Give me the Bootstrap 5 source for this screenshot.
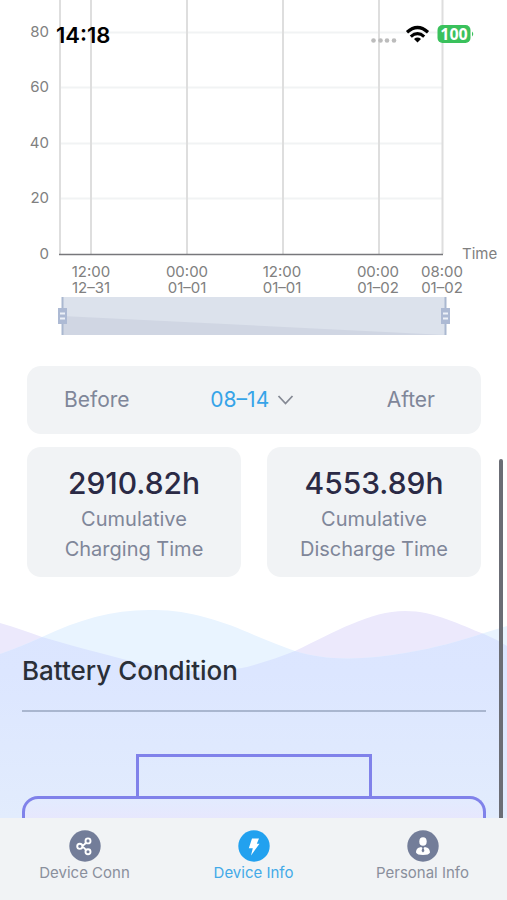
<!DOCTYPE html>
<html lang="en">
<head>
<meta charset="utf-8">
<meta name="viewport" content="width=device-width, initial-scale=1">
<title>Device Info</title>
<link href="https://cdn.jsdelivr.net/npm/bootstrap@5.3.0/dist/css/bootstrap.min.css" rel="stylesheet">
<style>
body { font-family: Inter, "Liberation Sans", sans-serif; color: #7f8699; background: #fff; }
.status-bar { padding: 22px 33px 0 56px; color: #000; }
.clock { font-size: 22px; line-height: 26px; font-weight: 600; }
.chart { font-size: 15px; fill: #808080; }
.panel { background: #f1f3f5; border-radius: 14px; }
.content { padding: 11px 26px 0 27px; }
.date-bar { height: 68px; padding: 0 46px 0 37px; }
.date-bar .btn { min-width: 60px; font-size: 21px; line-height: 28px; color: #7f8699; border: 0; }
.date-bar .btn.picked { color: #37a4e8; }
.stats { gap: 26px; margin-top: 13px; }
.stat { padding: 15px 20px 13px; font-size: 20px; line-height: 30px; }
.figure-value { font-size: 30px; line-height: 42px; font-weight: 500; color: #2b2a45; }
.condition { margin-top: 23px; padding: 54px 21px 0 22px; }
.waves { z-index: -1; }
.condition h2 { font-size: 26px; line-height: 34px; font-weight: 500; color: #2a2f38; padding-bottom: 22px; border-bottom: 2px solid #a9b6cf; }
.terminal { width: 51%; height: 42px; margin-top: 42px; border: 3px solid #8082ea; border-bottom: 0; }
.cell { border: 3px solid #8082ea; border-bottom: 0; border-radius: 16px 16px 0 0; background: linear-gradient(#e2ebfe, #e8e6fd 24px); }
.tabs { height: 82px; padding-top: 12px; background: #f1f3f5; }
.tabs a { font-size: 15px; line-height: 22px; color: #8a8f9c; }
.tabs a.active { color: #43aae8; }
.scroll-thumb { top: 459px; bottom: 82px; right: 4px; width: 4px; border-radius: 2px 2px 0 0; background: #6b6d75; }
</style>
</head>
<body class="vh-100 d-flex flex-column overflow-hidden position-relative">
<header class="status-bar position-absolute top-0 start-0 end-0 d-flex justify-content-between">
  <span class="clock">14:18</span>
  <svg width="103" height="26" viewBox="0 0 103 26" role="img" aria-label="Wi-Fi on, battery 100">
    <g fill="#bcbcbc"><circle cx="2.500" cy="18.500" r="2.300"/><circle cx="9.500" cy="18.500" r="2.300"/><circle cx="16" cy="18.500" r="2.300"/><circle cx="23" cy="18.500" r="2.300"/></g>
    <g fill="none" stroke="#000" stroke-width="3.200"><path d="M36 10.200Q46.500 .8 57 10.200"/><path d="M39.800 14.600Q46.500 8.800 53.200 14.600"/></g>
    <path d="M43 17Q46.500 14.200 50 17L46.500 20.500Z"/>
    <rect x="66.500" y="3" width="33" height="18" rx="5" fill="#3ac15c"/><path d="M101 9.500q2.500 2.500 0 5z" fill="#3ac15c"/>
    <text x="83" y="18" text-anchor="middle" font-family="Open Sans" font-size="16" font-weight="700" fill="#fff">100</text>
  </svg>
</header>

<svg class="chart w-100 flex-shrink-0" viewBox="0 0 507 355" role="img" aria-label="Values over time">
  <path d="M60 32.500H443M60 87.500H443M60 143.500H443M60 198.500H443" stroke="#f1f3f4" stroke-width="2"/>
  <path d="M60 0V254M91 0V254M187 0V254M283 0V254M379 0V254M442.500 0V254" stroke="#dedede" stroke-width="2"/>
  <path d="M59 254.500H443" stroke="#77777b" stroke-width="1.500"/>
  <g text-anchor="end"><text x="49" y="37">80</text><text x="49" y="92">60</text><text x="49" y="148">40</text><text x="49" y="203">20</text><text x="49" y="259">0</text></g>
  <text x="462" y="259">Time</text>
  <g text-anchor="middle">
    <text x="91" y="277">12:00</text><text x="91" y="293">12–31</text>
    <text x="187" y="277">00:00</text><text x="187" y="293">01–01</text>
    <text x="282" y="277">12:00</text><text x="282" y="293">01–01</text>
    <text x="378" y="277">00:00</text><text x="378" y="293">01–02</text>
    <text x="442" y="277">08:00</text><text x="442" y="293">01–02</text>
  </g>
  <rect x="62" y="297" width="384" height="38" fill="#dce2ec"/>
  <path d="M62 316L446 335H62Z" fill="#d0d6e3"/>
  <path d="M62.500 297V335M445.500 297V335" stroke="#aab8d0" stroke-width="2"/>
  <g fill="#adbad4"><rect x="58" y="308" width="9" height="16"/><rect x="441" y="308" width="9" height="16"/></g>
  <path d="M60 313.500H65M60 318.500H65M443 313.500H448M443 318.500H448" stroke="#edf1f8" stroke-width="2"/>
</svg>

<main class="flex-grow-1 d-flex flex-column">
  <div class="content">
    <div class="panel date-bar d-flex align-items-center justify-content-between">
      <button class="btn p-0 text-start" type="button">Before</button>
      <button class="btn picked p-0 d-flex align-items-center gap-2" type="button">08–14
        <svg width="17" height="12" viewBox="0 0 17 12" fill="none" stroke="#858994" stroke-width="1.800" aria-hidden="true"><path d="M1.500 2L8.500 9.500L15.500 2"/></svg>
      </button>
      <button class="btn p-0 text-end" type="button">After</button>
    </div>
    <div class="stats d-flex text-center">
      <div class="panel stat flex-fill w-50"><div class="figure-value">2910.82h</div>Cumulative<br>Charging Time</div>
      <div class="panel stat flex-fill w-50"><div class="figure-value">4553.89h</div>Cumulative<br>Discharge Time</div>
    </div>
  </div>

  <section class="condition position-relative flex-grow-1 d-flex flex-column">
    <svg class="waves position-absolute top-0 start-0 w-100 h-100" viewBox="0 0 507 218" preserveAspectRatio="none" aria-hidden="true">
      <defs>
        <linearGradient id="deep" x1="0" y1="0" x2="0" y2="1"><stop offset="0" stop-color="#dbe5ff"/><stop offset=".3" stop-color="#dce6ff"/><stop offset="1" stop-color="#e2ecfd"/></linearGradient>
        <clipPath id="violet"><path d="M0 23C15 27 28 32 42 37C80 48 115 57 150 66C180 72 220 75 254 65C268 61 282 56 295 51C335 32 370 11 405 11C435 11 460 25 484 34Q496 39 507 46V218H0Z"/></clipPath>
      </defs>
      <path fill="#ece9fc" d="M0 23C15 27 28 32 42 37C80 48 115 57 150 66C180 72 220 75 254 65C268 61 282 56 295 51C335 32 370 11 405 11C435 11 460 25 484 34Q496 39 507 46V218H0Z"/>
      <path fill="#e9f4ff" d="M0 54Q20 47 42 37C80 19 115 9 155 10C190 10 225 22 254 35Q278 45 295 51C325 61 365 60 405 53C435 48 460 41 484 33L507 26V218H0Z"/>
      <path fill="url(#deep)" clip-path="url(#violet)" d="M0 54Q20 47 42 37C80 19 115 9 155 10C190 10 225 22 254 35Q278 45 295 51C325 61 365 60 405 53C435 48 460 41 484 33L507 26V218H0Z"/>
    </svg>
    <h2 class="mb-0">Battery Condition</h2>
    <div class="terminal mx-auto flex-shrink-0"></div>
    <div class="cell flex-grow-1"></div>
  </section>
</main>

<nav class="tabs row g-0 text-center flex-shrink-0" aria-label="Main">
  <a href="#" class="col d-flex flex-column align-items-center text-decoration-none">
    <svg width="32" height="32" viewBox="0 0 32 32" aria-hidden="true"><circle cx="16" cy="16" r="15.700" fill="#737d99"/><g fill="none" stroke="#fff" stroke-width="1.900"><circle cx="10.800" cy="16.300" r="2.600"/><circle cx="19" cy="10.900" r="2.500"/><circle cx="19" cy="21.700" r="2.500"/><path d="M13.300 15.800Q15.600 15 17 12.500M13.300 16.800Q15.600 17.600 17 20.100"/></g></svg>
    <span>Device Conn</span>
  </a>
  <a href="#" class="col active d-flex flex-column align-items-center text-decoration-none" aria-current="page">
    <svg width="32" height="32" viewBox="0 0 32 32" aria-hidden="true"><circle cx="16" cy="16" r="15.700" fill="#22a1ef"/><path d="M14 8.500H21L18.800 13.800H21.500L13 25.500L14.800 18.300H10.800Z" fill="#fff"/></svg>
    <span>Device Info</span>
  </a>
  <a href="#" class="col d-flex flex-column align-items-center text-decoration-none">
    <svg width="32" height="32" viewBox="0 0 32 32" aria-hidden="true"><circle cx="16" cy="16" r="15.700" fill="#737d99"/><ellipse cx="16" cy="11.500" rx="3.700" ry="4.300" fill="#fff"/><path d="M9 22.500C9 18.600 12 17.200 14.200 17L16 18.500L17.800 17C20 17.200 23 18.600 23 22.500Q22 25 16 25Q10 25 9 22.500Z" fill="#fff"/><path d="M15.200 18.200H16.800L17.400 21L16 22.500L14.600 21Z" fill="#737d99"/></svg>
    <span>Personal Info</span>
  </a>
</nav>
<div class="scroll-thumb position-absolute"></div>
<script src="https://cdn.jsdelivr.net/npm/bootstrap@5.3.0/dist/js/bootstrap.bundle.min.js"></script>
</body>
</html>
